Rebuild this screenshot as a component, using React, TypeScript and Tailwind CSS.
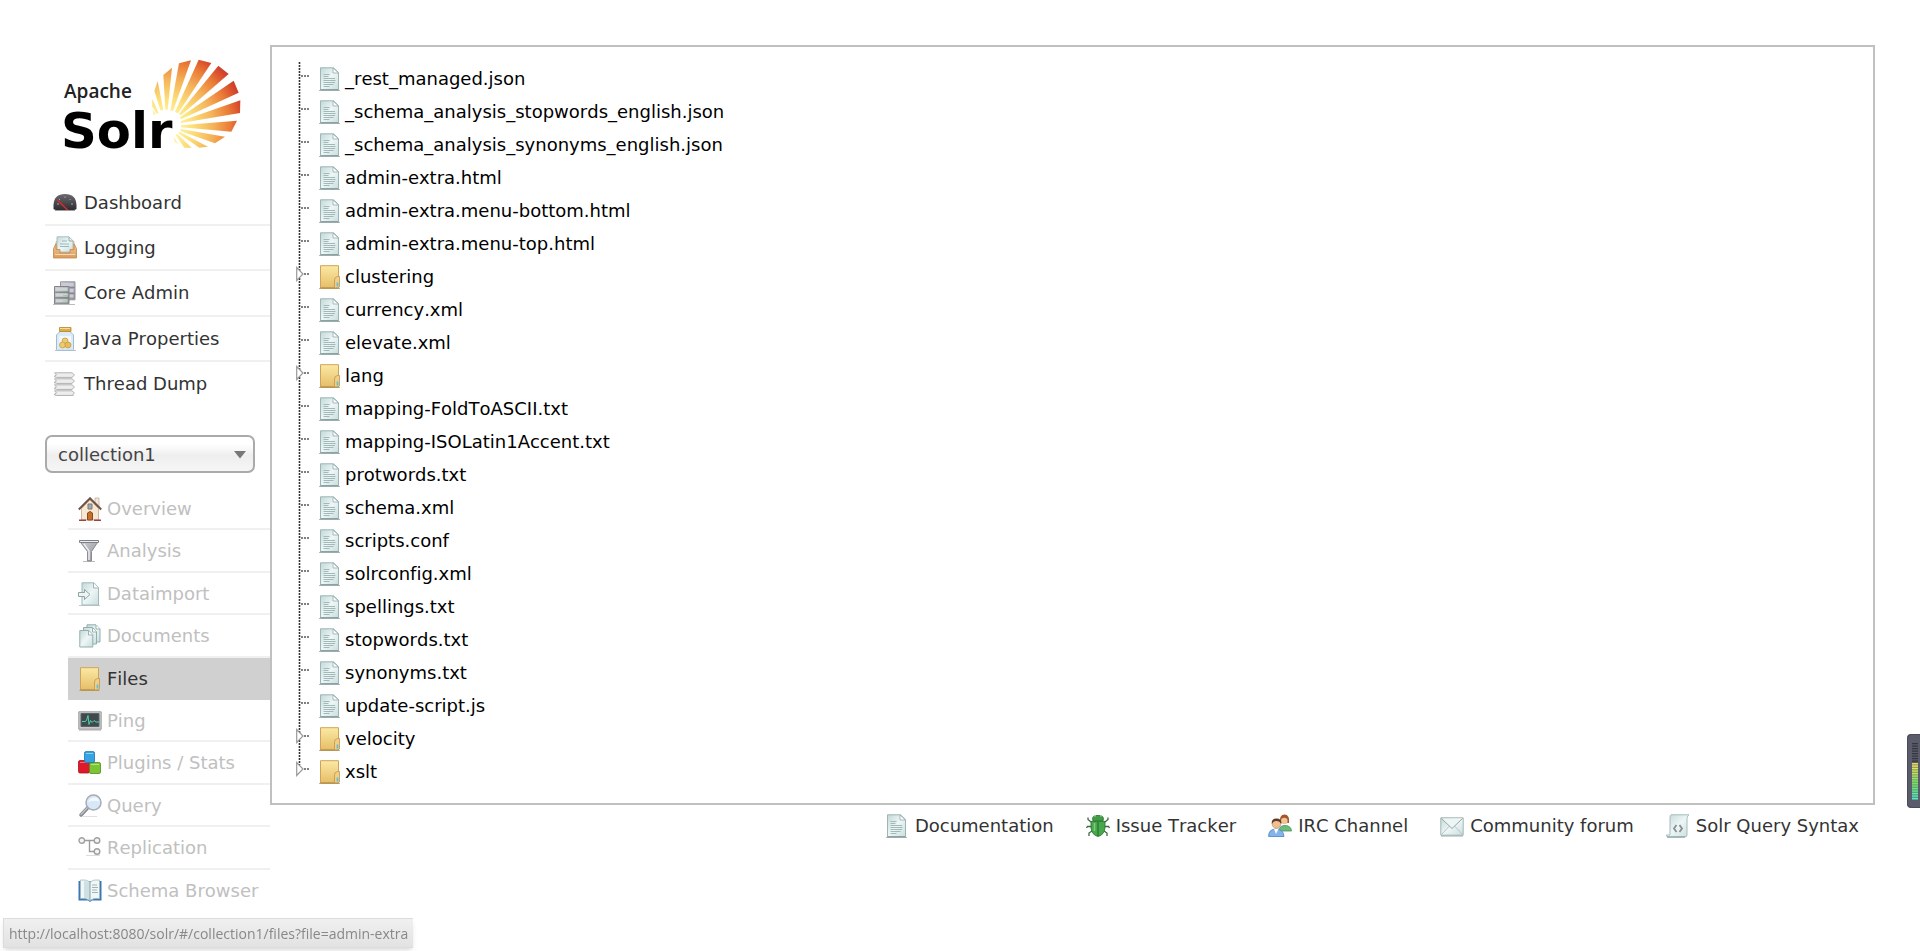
import React from 'react';

type IconProps = { children: React.ReactNode };

const Icon: React.FC<IconProps> = ({ children }) => (
  <svg viewBox="0 0 24 24" className="w-6 h-6 shrink-0" fill="none" aria-hidden="true">
    {children}
  </svg>
);

// Gradients shared by all icons
const Defs = () => (
  <svg className="absolute w-0 h-0" aria-hidden="true">
    <defs>
      <linearGradient id="paper" x1="0" y1="0" x2="1" y2="1">
        <stop offset="0" stopColor="#c3d8d8" />
        <stop offset="0.5" stopColor="#eef6f6" />
        <stop offset="1" stopColor="#c8dede" />
      </linearGradient>
      <linearGradient id="folder" x1="0" y1="0" x2="0" y2="1">
        <stop offset="0" stopColor="#fbe9a4" />
        <stop offset="1" stopColor="#e6bd68" />
      </linearGradient>
      <linearGradient id="metal" x1="0" y1="0" x2="1" y2="1">
        <stop offset="0" stopColor="#cfd0d6" />
        <stop offset="1" stopColor="#8c9092" />
      </linearGradient>
      <linearGradient id="dial" x1="0" y1="0" x2="0" y2="1">
        <stop offset="0" stopColor="#6a6a70" />
        <stop offset="1" stopColor="#2d2d31" />
      </linearGradient>
      <linearGradient id="tray" x1="0" y1="0" x2="0" y2="1">
        <stop offset="0" stopColor="#f3c795" />
        <stop offset="1" stopColor="#dc9c5c" />
      </linearGradient>
      <linearGradient id="level" x1="0" y1="0" x2="0" y2="1">
        <stop offset="0" stopColor="#a89a52" />
        <stop offset="0.5" stopColor="#7fa565" />
        <stop offset="1" stopColor="#459a94" />
      </linearGradient>
      <radialGradient id="sun" gradientUnits="userSpaceOnUse" cx="405" cy="285" r="255">
        <stop offset="0.1" stopColor="#fff7b0" />
        <stop offset="0.3" stopColor="#fde27c" />
        <stop offset="0.55" stopColor="#f5b45a" />
        <stop offset="0.75" stopColor="#eb7d38" />
        <stop offset="0.9" stopColor="#d6492c" />
        <stop offset="1" stopColor="#c22f31" />
      </radialGradient>
    </defs>
  </svg>
);

const FileIcon = () => (
  <Icon>
    <path d="M1 23.500h21" stroke="#b4b8b8" />
    <path d="M2.500.8h13l5 4.700V22.800h-18z" fill="url(#paper)" stroke="#9cb6b6" />
    <path d="M2.500 22.800h18" stroke="#7a9494" />
    <path d="M15 1v5h5.500z" fill="#fff" stroke="#93abab" strokeWidth=".8" />
    <path
      d="M5.500 7.500h6M5.500 9.500h5M5.500 11.500h11.500M5.500 13.500h12M5.500 15.500h11.500M5.500 17.500h10M5.500 19.500h6"
      stroke="#a3b8b8"
    />
  </Icon>
);

const FolderIcon = () => (
  <Icon>
    <path d="M1 23.500h21" stroke="#b5b2a8" />
    <path d="M2.500.7h18v22.500h-18z" fill="url(#folder)" stroke="#cfa456" />
    <path d="M2.500 23h18" stroke="#a98443" />
    <path d="M16.500 23V15q0-3 3-3.500h2V22q-1 1-5 1z" fill="#efcf88" stroke="#c0954b" strokeWidth=".8" />
    <path d="M19.500 17.500v4" stroke="#5cc0e0" strokeWidth="1.800" />
  </Icon>
);

const DashboardIcon = () => (
  <Icon>
    <path d="M.5 18V14Q1 3 12 3t11.500 11v4q-1 1-3 1h-17q-2 0-3-1z" fill="url(#dial)" />
    <path d="M4 13h2M6 8l1 1M12 5.500v1.500M17.500 8l-1 1M20 13h-2" stroke="#a5a5aa" />
    <path d="M4.500 9L15 19.500" stroke="#d92b2b" strokeWidth="1.500" />
    <path d="M2 19.500h20" stroke="#a0a0a4" />
  </Icon>
);

const LoggingIcon = () => (
  <Icon>
    <path d="M3 5h18l2.500 9v8h-23v-8z" fill="#e9b27a" />
    <path d="M4 .8h12l4 4V16H4z" fill="url(#paper)" stroke="#a8c2c2" />
    <path d="M16 1v4h4" stroke="#8faaaa" />
    <path d="M9 5h5M7 8h9M7 10.500h9" stroke="#98b8b8" />
    <path d="M.5 12.500L3 8v5.500h4v3.500h10v-3.500h4V8l2.500 4.500v9.500h-23z" fill="url(#tray)" stroke="#c38a51" strokeWidth=".8" />
    <path d="M2 18.500h20" stroke="#f8d8ae" />
  </Icon>
);

// Two stacked server racks
const CoreIcon = () => (
  <Icon>
    <path d="M7.500.8H22v18H7.500z" fill="url(#metal)" stroke="#94969a" />
    <path d="M9 3.500h11.500M16 9.500h4.500M16 15h4.500" stroke="#cdc9dc" strokeWidth="3" />
    <path d="M8 6.500h14M8 12.500h14" stroke="#85888e" />
    <path d="M1.500 5.500H16v17.300H1.500z" fill="url(#metal)" stroke="#808387" />
    <path d="M3 8.300h11.500M3 14h11.500M3 19.800h11.500" stroke="#cfd4d3" strokeWidth="3" />
    <path d="M2 11.200h14M2 16.900h14" stroke="#74777b" />
    <path d="M10 20h4M10 14.500h4" stroke="#9cc8a2" />
    <path d="M0 23.500h22" stroke="#bbb" />
  </Icon>
);

const JarIcon = () => (
  <Icon>
    <path d="M2 23.500h21" stroke="#c0c0c0" />
    <path d="M7 4.500h10l3.500 3.500v14.500q0 .8-1 .8h-15q-1 0-1-.8V8z" fill="#dcebf6" stroke="#9dbcd4" />
    <path d="M6.500 9H18v11H6.500z" fill="#f2f8fc" />
    <path d="M6.500.5h11.500v4H6.500z" fill="#dcae4a" stroke="#b8862a" strokeWidth=".8" />
    <path d="M7 1.500h10" stroke="#f6dc90" />
    <circle cx="12" cy="14" r="3" fill="#eccb78" stroke="#c99b41" strokeWidth=".8" />
    <circle cx="9.500" cy="18" r="3" fill="#eccb78" stroke="#c99b41" strokeWidth=".8" />
    <circle cx="15" cy="18" r="3" fill="#e5bd60" stroke="#c99b41" strokeWidth=".8" />
  </Icon>
);

const ThreadIcon = () => (
  <Icon>
    <path d="M2 23.500h19" stroke="#ccc" />
    {[0, 6, 12, 18].map((y) => (
      <path
        key={y}
        transform={`translate(0 ${y})`}
        d="M1.500.8H19l2.500 2.200-2.500 2.400H3.500L1 4.500l2.500-1.500z"
        fill="#ededed"
        stroke="#b2b2b2"
      />
    ))}
  </Icon>
);

const HouseIcon = () => (
  <Icon>
    <path d="M17 1h4v9h-4z" fill="#f2e6d8" stroke="#c2ae9c" strokeWidth=".8" />
    <path d="M3.500 11.500L12 3l8.500 8.500V23h-17z" fill="#f6e8d4" stroke="#c5a88a" strokeWidth=".8" />
    <path d="M.8 12.500L12 1.300l11.200 11.200" stroke="#6f5148" strokeWidth="2" />
    <path d="M10 7h4v5h-4z" fill="#8fb0cc" stroke="#917258" />
    <path d="M9.500 23v-7q2.500-3 5 0v7z" fill="#c4702c" stroke="#8c4b1b" />
    <path d="M1 23.300h7M16 23.300h7" stroke="#9c4144" strokeWidth="1.400" />
  </Icon>
);

const FunnelIcon = () => (
  <Icon>
    <path d="M5 22.500h12" stroke="#bbb" />
    <path d="M1.500 2h19l-7 10.500V22H9.500V12.500z" fill="url(#metal)" stroke="#8c8d96" />
    <path d="M1.500 1.500h19v2h-19z" fill="#eceef2" stroke="#7e8088" />
    <path d="M6 5l5 7v9" stroke="#ebebf3" strokeWidth="1.500" />
  </Icon>
);

const ImportIcon = () => (
  <Icon>
    <path d="M1 23.500h21" stroke="#c4c8c8" />
    <path d="M4 .8h12l4.500 4.700V23H4z" fill="url(#paper)" stroke="#a0baba" />
    <path d="M15.500 1v5h5" fill="#fff" stroke="#9db5b5" />
    <path d="M.5 10.500h6V7.500l5.500 5-5.500 5v-3h-6z" fill="#eef4f4" stroke="#8fa5a5" />
  </Icon>
);

const DocumentsIcon = () => (
  <Icon>
    <path d="M9 .8h9l4 4V18H9z" fill="url(#paper)" stroke="#94aeae" />
    <path d="M5.500 3.500h9l4 4v12.500h-13z" fill="url(#paper)" stroke="#94aeae" />
    <path d="M1.800 6.500h9l4 4V23h-13z" fill="url(#paper)" stroke="#94aeae" />
    <path d="M10.500 7v4h4M14.500 4v4h4M18 1v4h4" fill="#fff" stroke="#86a2a2" strokeWidth=".8" />
  </Icon>
);

const PingIcon = () => (
  <Icon>
    <path d="M.8 2.800h22.400v17.400H.8z" fill="#c9cacb" stroke="#9b9c9d" />
    <path d="M3 4.500h18v13H3z" fill="#3e4a4c" stroke="#5b6364" />
    <path d="M4 12.500h3l1.500-1 1.500-5 1 9 1.500-4 1.500 2 2-2 2 1.500h3" stroke="#54cfae" />
    <path d="M1 21h22" stroke="#aaa" />
  </Icon>
);

const PluginsIcon = () => (
  <Icon>
    <rect x=".5" y="9.500" width="11" height="12.500" rx="1.500" fill="#e0182c" stroke="#a81220" strokeWidth=".8" />
    <path d="M2 11.500h8" stroke="#f2707b" />
    <rect x="11.500" y="11.500" width="11" height="11" rx="1.500" fill="#7cc433" stroke="#4f8f1b" strokeWidth=".8" />
    <path d="M13 13.500h8" stroke="#b5e57f" />
    <rect x="6.500" y=".6" width="10" height="11" rx="1.500" fill="#34a3df" stroke="#1d77ad" strokeWidth=".8" />
    <path d="M8 2.500h7" stroke="#8bd0f2" />
  </Icon>
);

const QueryIcon = () => (
  <Icon>
    <path d="M5 22.500h14" stroke="#e0e0e0" />
    <path d="M10 13.500L3 21" stroke="#85878c" strokeWidth="3.500" strokeLinecap="round" />
    <path d="M9.500 13.500L3 20.500" stroke="#c5c6ca" strokeWidth="1.200" strokeLinecap="round" />
    <circle cx="15.500" cy="8.500" r="7.500" fill="#d9e8f8" stroke="#a6abb4" strokeWidth="1.500" />
    <path d="M10 8q2-5 8-4.500 3 1 3.500 4Q16 6 10 8z" fill="#f4f9fe" />
  </Icon>
);

const ReplicationIcon = () => (
  <Icon>
    <path d="M6 4.500h10M11.500 4.500v11H16" stroke="#9c9c9c" strokeWidth="1.400" />
    <circle cx="3.800" cy="4.500" r="2.800" fill="#f4f4f4" stroke="#a0a0a0" strokeWidth="1.400" />
    <circle cx="19" cy="4.500" r="2.800" fill="#f4f4f4" stroke="#a0a0a0" strokeWidth="1.400" />
    <circle cx="19" cy="15.500" r="2.800" fill="#f4f4f4" stroke="#a0a0a0" strokeWidth="1.400" />
    <path d="M8 19.500h14" stroke="#ddd" />
  </Icon>
);

const BookIcon = () => (
  <Icon>
    <path d="M.5 2h23v19.500H14L12 23l-2-1.500H.5z" fill="#3d76b5" />
    <path d="M2.500 1q6-.8 9.500 2 3.500-2.800 9.500-2v18.500q-6-.8-9.500 2-3.500-2.800-9.500-2z" fill="#f1f7f7" stroke="#a4bcc0" strokeWidth=".8" />
    <path d="M6 2q4 0 6 1.500v17.500Q10 19 6 19z" fill="#cfe0e2" />
    <path d="M12 3v18.500" stroke="#84a2a8" />
    <path d="M14 6h5M14 8.500h6M14 11h5M14 13.500h6" stroke="#9fb4b6" />
  </Icon>
);

const BugIcon = () => (
  <Icon>
    <path
      d="M5 8L2 5.500V3.500M19 8l3-2.500V3.500M5 12.500H1.500L.5 14M19 12.500h3.500l1 1.500M6 17l-3 2v3M18 17l3 2v3"
      stroke="#3c6b3c"
      strokeWidth="1.300"
    />
    <path d="M7 7Q5.500 3 9 1.500h6Q18.500 3 17 7z" fill="#3f9e45" stroke="#2a6f30" strokeWidth=".8" />
    <path d="M8 1.800h2M14 1.800h2" stroke="#8fd68a" strokeWidth="1.500" />
    <path d="M5 7.500h14v6.500q-1 7-7 8.500-6-1.500-7-8.500z" fill="#48a84d" stroke="#2a6f30" strokeWidth=".8" />
    <path d="M12 8v14" stroke="#246629" />
    <path d="M8.500 9v8" stroke="#7fce7e" strokeWidth="1.500" />
  </Icon>
);

const PeopleIcon = () => (
  <Icon>
    <path d="M11 17q0-5.500 6-5.500t6.500 5.500z" fill="#6cbb7c" stroke="#4a9459" strokeWidth=".8" />
    <path d="M12 9q-1-8.500 4.500-8.500T21 9z" fill="#a4562c" />
    <circle cx="16.300" cy="7" r="3.300" fill="#f0c39a" />
    <path d="M.6 22.500Q.5 15 8 15t8 7.500z" fill="#84b4ea" stroke="#4a83c4" strokeWidth=".8" />
    <path d="M6 15l2 5 2.500-5z" fill="#fff" />
    <circle cx="8.500" cy="10" r="4.300" fill="#efbf92" stroke="#b9855c" strokeWidth=".6" />
    <path d="M3.800 10Q3 4.500 8.500 4.500t4.800 5.500q-2-3.500-4.800-3-3-.5-4.700 3z" fill="#5b3b24" />
  </Icon>
);

const MailIcon = () => (
  <Icon>
    <path d="M.8 3.800h22.400v17.400H.8z" fill="url(#paper)" stroke="#a3b6b6" />
    <path d="M1 21L9.500 12M23 21l-8.500-9" stroke="#b3c6c6" />
    <path d="M1.500 4.500L12 14.500 22.500 4.500" fill="#eef5f5" stroke="#93a8a8" />
    <path d="M1 22h22" stroke="#9eabab" />
  </Icon>
);

const ScriptIcon = () => (
  <Icon>
    <path d="M5 .8h18q-2 1-2 3.500V21q0 2-2.500 2H2q-1.500 0-1.500-2H4V4Q4 1 5 .8z" fill="url(#paper)" stroke="#a5bcbc" />
    <path d="M1 23h18" stroke="#7f9696" />
    <path d="M10.500 11L8 14.500l2.500 3.500M13.500 11l2.500 3.500-2.500 3.500" stroke="#8a8f8f" strokeWidth="1.800" />
  </Icon>
);

const Logo = () => (
  <svg viewBox="90 75 552 330" className="w-46 h-[110px]" role="img" aria-label="Apache Solr">
    <g fill="url(#sun)">
      <path d="M364 204L383 246 376 248 364 226z" />
      <path d="M364 236L374 248 369 252z" />
      <path d="M380 150L397 237 389 239 370 180z" />
      <path d="M397 132L423 110 410 236 403 236z" />
      <path d="M444 97L480 88 426 240 418 239z" />
      <path d="M503 86L541 96 441 247 432 243z" />
      <path d="M562 104L593 129 450 253 444 248z" />
      <path d="M608 149L623 185 450 265 447 259z" />
      <path d="M628 208L627 246 450 276 450 270z" />
      <path d="M618 269L601 302 450 289 450 283z" />
      <path d="M582 317L552 337 448 300 449 294z" />
      <path d="M531 347L505 350 442 307 445 302z" />
      <path d="M482 350L460 350 434 312 438 308z" />
      <path d="M441 340L430 330 429 318z" />
    </g>
    <text x="99" y="201" fontSize="57" fontWeight="600" fill="#222" className="font-['Open_Sans',sans-serif]">
      Apache
    </text>
    <text x="90" y="351" fontSize="149" fontWeight="700" fill="#000" className="font-['DejaVu_Sans',sans-serif]">
      Solr
    </text>
  </svg>
);

const mainMenu = [
  { label: 'Dashboard', icon: <DashboardIcon /> },
  { label: 'Logging', icon: <LoggingIcon /> },
  { label: 'Core Admin', icon: <CoreIcon /> },
  { label: 'Java Properties', icon: <JarIcon /> },
  { label: 'Thread Dump', icon: <ThreadIcon /> },
];

const coreMenu = [
  { label: 'Overview', icon: <HouseIcon /> },
  { label: 'Analysis', icon: <FunnelIcon /> },
  { label: 'Dataimport', icon: <ImportIcon /> },
  { label: 'Documents', icon: <DocumentsIcon /> },
  { label: 'Files', icon: <FolderIcon />, active: true },
  { label: 'Ping', icon: <PingIcon /> },
  { label: 'Plugins / Stats', icon: <PluginsIcon /> },
  { label: 'Query', icon: <QueryIcon /> },
  { label: 'Replication', icon: <ReplicationIcon /> },
  { label: 'Schema Browser', icon: <BookIcon /> },
];

const files = [
  { name: '_rest_managed.json' },
  { name: '_schema_analysis_stopwords_english.json' },
  { name: '_schema_analysis_synonyms_english.json' },
  { name: 'admin-extra.html' },
  { name: 'admin-extra.menu-bottom.html' },
  { name: 'admin-extra.menu-top.html' },
  { name: 'clustering', folder: true },
  { name: 'currency.xml' },
  { name: 'elevate.xml' },
  { name: 'lang', folder: true },
  { name: 'mapping-FoldToASCII.txt' },
  { name: 'mapping-ISOLatin1Accent.txt' },
  { name: 'protwords.txt' },
  { name: 'schema.xml' },
  { name: 'scripts.conf' },
  { name: 'solrconfig.xml' },
  { name: 'spellings.txt' },
  { name: 'stopwords.txt' },
  { name: 'synonyms.txt' },
  { name: 'update-script.js' },
  { name: 'velocity', folder: true },
  { name: 'xslt', folder: true },
];

const footerLinks = [
  { label: 'Documentation', icon: <FileIcon /> },
  { label: 'Issue Tracker', icon: <BugIcon /> },
  { label: 'IRC Channel', icon: <PeopleIcon /> },
  { label: 'Community forum', icon: <MailIcon /> },
  { label: 'Solr Query Syntax', icon: <ScriptIcon /> },
];

// Dotted connector in front of each tree entry
const Branch: React.FC<{ folder?: boolean; last?: boolean; name: string }> = ({ folder, last, name }) => {
  const lines = (
    <svg viewBox="0 0 14 33" className="w-3.5 h-[33px] block" fill="none" aria-hidden="true">
      <path d={last ? 'M3.500 0v10' : 'M3.500 0v33'} stroke="#333" strokeWidth="1.600" strokeDasharray="2 1" />
      <path d="M5 14h9" stroke="#555" strokeWidth="1.500" strokeDasharray="2 1" />
      {folder && <path d="M.7 7.500v13l6.300-6.500z" fill="#fff" stroke="#999" strokeWidth="1.200" />}
    </svg>
  );
  return folder ? (
    <button type="button" aria-label={`Expand ${name}`} className="shrink-0">
      {lines}
    </button>
  ) : (
    <span className="shrink-0">{lines}</span>
  );
};

const LevelMeter = () => (
  <svg viewBox="0 0 13 74" className="fixed right-0 top-[734px] w-[13px] h-[74px]" aria-hidden="true">
    <path d="M13 0H4Q0 0 0 4v66q0 4 4 4h9z" fill="#5a5c6b" />
    <path d="M13 .5H4.500Q.5.500.5 4.500v65q0 4 4 4H13" fill="none" stroke="#484a57" />
    <rect x="5" y="29" width="6" height="37" fill="url(#level)" />
    {Array.from({ length: 23 }, (_, i) => (
      <rect
        key={i}
        x="5"
        y={9 + i * 2.5}
        width="6"
        height="1.200"
        fill={i < 8 ? '#34353f' : `hsl(${52 + (i - 8) * 8} 75% 65%)`}
      />
    ))}
  </svg>
);

const App: React.FC = () => {
  return (
    <div className="min-h-screen bg-white pt-[45px] px-[45px] text-lg leading-6 text-[#333] font-[Verdana,'DejaVu_Sans',sans-serif] [font-kerning:none] [font-variant-ligatures:none]">
      <Defs />
      <div className="flex items-start">
        {/* Sidebar */}
        <aside className="w-[225px] shrink-0">
          <a href="#/" className="block pl-4 pt-[11px] pb-[15px]">
            <Logo />
          </a>

          <nav aria-label="Main">
            <ul className="grid auto-rows-fr h-[226px]">
              {mainMenu.map((item, i) => (
                <li key={item.label} className={i < mainMenu.length - 1 ? 'border-b-2 border-[#f0f0f0]' : ''}>
                  <a href="#/" className="flex items-center gap-[7px] h-11 pl-2">
                    {item.icon}
                    <span>{item.label}</span>
                  </a>
                </li>
              ))}
            </ul>
          </nav>

          <div className="relative mt-7 mr-[15px]">
            <select
              aria-label="Core Selector"
              defaultValue="collection1"
              className="block w-full h-[38px] pt-0.5 pl-[11px] pr-8 appearance-none rounded-[7px] border-2 border-[#aaa] bg-linear-to-b from-white from-20% via-[#eee] via-55% to-[#f6f6f6] text-[#444]"
            >
              <option value="collection1">collection1</option>
            </select>
            <svg viewBox="0 0 12 8" className="absolute right-[9px] top-4 w-3 h-2 pointer-events-none" aria-hidden="true">
              <path d="M0 0h12L6 7.500z" fill="#777" />
            </svg>
          </div>

          <nav aria-label="Core" className="mt-[15px] ml-[23px]">
            <ul className="grid auto-rows-fr h-[424px]">
              {coreMenu.map((item, i) => (
                <li
                  key={item.label}
                  className={
                    item.active
                      ? 'bg-[#d0d0d0] text-[#333]'
                      : i < coreMenu.length - 1
                        ? 'border-b-2 border-[#f0f0f0] text-[#c0c0c0]'
                        : 'text-[#c0c0c0]'
                  }
                >
                  <a href="#/collection1" className="flex items-center gap-[5px] h-[42px] pl-2.5">
                    {item.icon}
                    <span className="whitespace-nowrap">{item.label}</span>
                  </a>
                </li>
              ))}
            </ul>
          </nav>
        </aside>

        <div className="flex-1 min-w-0">
          {/* File tree */}
          <main className="border-2 border-[#c0c0c0] pt-[15px] pb-[15px] pl-6">
            <ul className="text-black">
              {files.map((file, i) => (
                <li key={file.name} className="flex items-center h-[33px]">
                  <Branch folder={file.folder} last={i === files.length - 1} name={file.name} />
                  <a href={`#/collection1/files?file=${file.name}`} className="flex items-center gap-[3px] ml-2">
                    {file.folder ? <FolderIcon /> : <FileIcon />}
                    <span>{file.name}</span>
                  </a>
                </li>
              ))}
            </ul>
          </main>

          {/* Footer */}
          <footer className="pt-[9px] pr-4">
            <ul className="flex flex-wrap justify-end gap-8">
              {footerLinks.map((link) => (
                <li key={link.label}>
                  <a href="#/" className="flex items-center gap-1.5">
                    {link.icon}
                    <span>{link.label}</span>
                  </a>
                </li>
              ))}
            </ul>
          </footer>
        </div>
      </div>

      {/* Link preview */}
      <div className="fixed left-[3px] bottom-[3px] w-[410px] h-[30px] pt-0.5 pl-[5px] whitespace-nowrap border border-r-0 border-[#dcdcdc] bg-linear-to-b from-[#f0f0f0] to-[#e2e2e2] shadow-md text-sm leading-[26px] text-[#888] font-['Open_Sans','Noto_Sans',sans-serif]">
        http://localhost:8080/solr/#/collection1/files?file=admin-extra
      </div>

      <LevelMeter />
    </div>
  );
};

export default App;
